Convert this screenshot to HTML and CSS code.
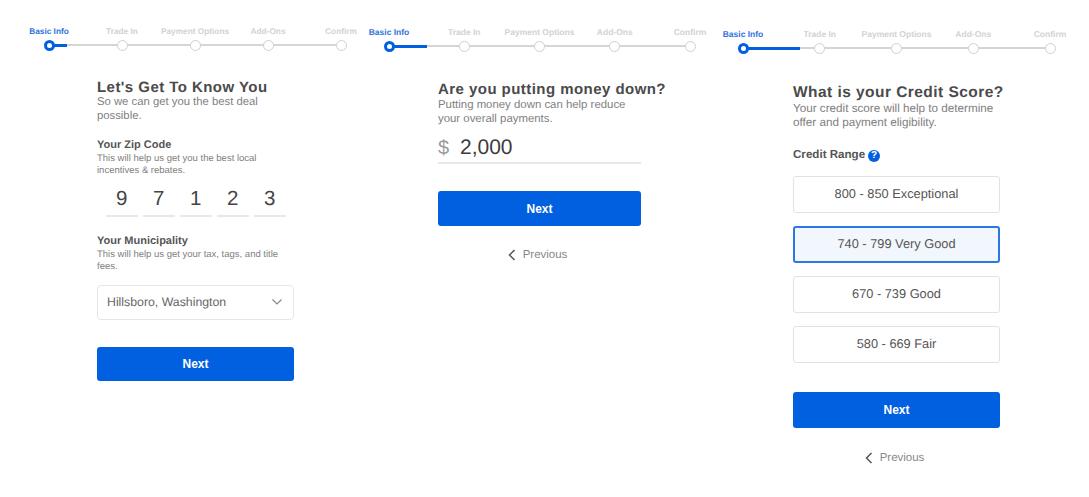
FILE: index.html
```html
<!DOCTYPE html>
<html lang="en">
<head>
    <meta charset="UTF-8">
    <meta name="viewport" content="width=device-width, initial-scale=1.0">
    <title>Get Started</title>
    <link rel="stylesheet" href="styles.css">
</head>
<body>
    <section class="panel panel-zip">
        <div class="stepper">
            <span class="track"></span>
            <span class="track-fill"></span>
            <div class="step active"><span class="step-label">Basic Info</span><span class="step-dot"></span></div>
            <div class="step"><span class="step-label">Trade In</span><span class="step-dot"></span></div>
            <div class="step"><span class="step-label">Payment Options</span><span class="step-dot"></span></div>
            <div class="step"><span class="step-label">Add-Ons</span><span class="step-dot"></span></div>
            <div class="step"><span class="step-label">Confirm</span><span class="step-dot"></span></div>
        </div>
        <div class="content">
            <h2 class="title">Let's Get To Know You</h2>
            <p class="sub">So we can get you the best deal possible.</p>
            <h4 class="label zip-label">Your Zip Code</h4>
            <p class="hint">This will help us get you the best local incentives &amp; rebates.</p>
            <div class="zip-row">
                <span class="zip-digit">9</span>
                <span class="zip-digit">7</span>
                <span class="zip-digit">1</span>
                <span class="zip-digit">2</span>
                <span class="zip-digit">3</span>
            </div>
            <h4 class="label muni-label">Your Municipality</h4>
            <p class="hint">This will help us get your tax, tags, and title fees.</p>
            <div class="select">
                <span>Hillsboro, Washington</span>
                <svg width="12" height="8" viewBox="0 0 12 8"><path d="M1.500 1.500 6 6l4.500-4.500" fill="none" stroke="#888" stroke-width="1.200"/></svg>
            </div>
            <button type="button" class="button">Next</button>
        </div>
    </section>

    <section class="panel panel-down">
        <div class="stepper">
            <span class="track"></span>
            <span class="track-fill"></span>
            <div class="step active"><span class="step-label">Basic Info</span><span class="step-dot"></span></div>
            <div class="step"><span class="step-label">Trade In</span><span class="step-dot"></span></div>
            <div class="step"><span class="step-label">Payment Options</span><span class="step-dot"></span></div>
            <div class="step"><span class="step-label">Add-Ons</span><span class="step-dot"></span></div>
            <div class="step"><span class="step-label">Confirm</span><span class="step-dot"></span></div>
        </div>
        <div class="content">
            <h2 class="title">Are you putting money down?</h2>
            <p class="sub">Putting money down can help reduce your overall payments.</p>
            <div class="amount"><span class="currency">$</span><span class="amount-value">2,000</span></div>
            <button type="button" class="button">Next</button>
            <a href="#" class="previous">
                <svg width="8" height="12" viewBox="0 0 8 12"><path d="M6.500 1 1.500 6l5 5" fill="none" stroke="#555" stroke-width="1.500"/></svg>
                Previous
            </a>
        </div>
    </section>

    <section class="panel panel-credit">
        <div class="stepper">
            <span class="track"></span>
            <span class="track-fill"></span>
            <div class="step active"><span class="step-label">Basic Info</span><span class="step-dot"></span></div>
            <div class="step"><span class="step-label">Trade In</span><span class="step-dot"></span></div>
            <div class="step"><span class="step-label">Payment Options</span><span class="step-dot"></span></div>
            <div class="step"><span class="step-label">Add-Ons</span><span class="step-dot"></span></div>
            <div class="step"><span class="step-label">Confirm</span><span class="step-dot"></span></div>
        </div>
        <div class="content">
            <h2 class="title">What is your Credit Score?</h2>
            <p class="sub">Your credit score will help to determine offer and payment eligibility.</p>
            <h4 class="label range-label">Credit Range
                <span class="help">?</span>
            </h4>
            <div class="options">
                <div class="option">800 - 850 Exceptional</div>
                <div class="option selected">740 - 799 Very Good</div>
                <div class="option">670 - 739 Good</div>
                <div class="option">580 - 669 Fair</div>
            </div>
            <button type="button" class="button">Next</button>
            <a href="#" class="previous">
                <svg width="8" height="12" viewBox="0 0 8 12"><path d="M6.500 1 1.500 6l5 5" fill="none" stroke="#555" stroke-width="1.500"/></svg>
                Previous
            </a>
        </div>
    </section>
</body>
</html>
```

FILE: styles.css
```css
* {
    box-sizing: border-box;
}

body {
    margin: 0;
    display: flex;
    align-items: flex-start;
    background: #fff;
    font-family: "Liberation Sans", Arial, sans-serif;
    text-rendering: geometricPrecision;
    color: #808080;
}

h2,
h4,
p {
    margin: 0;
}

.panel-zip {
    width: 369px;
    padding-top: 26px;
}

.panel-down {
    width: 354px;
    padding-top: 27px;
}

.panel-credit {
    width: 366px;
    padding-top: 29px;
}

/* stepper */

.stepper {
    position: relative;
    display: flex;
    justify-content: space-between;
    height: 26px;
}

.panel-zip .stepper {
    margin: 0 28px 0 49px;
}

.panel-down .stepper {
    margin: 0 33px 0 20px;
}

.panel-credit .stepper {
    margin: 0 39px 0 20px;
}

.track,
.track-fill {
    position: absolute;
    left: 0;
    top: 18px;
    height: 2px;
    background: #d5d5d5;
}

.track {
    width: 100%;
}

.track-fill {
    height: 3px;
    background: #0060df;
}

.panel-zip .track-fill {
    width: 18px;
}

.panel-down .track-fill {
    width: 38px;
}

.panel-credit .track-fill {
    width: 57px;
}

.step {
    position: relative;
    width: 0;
    display: flex;
    flex-direction: column;
    align-items: center;
}

.step-label {
    height: 14px;
    font-size: 8.300px;
    font-weight: bold;
    line-height: 11px;
    white-space: nowrap;
    color: #d2d2d2;
}

.panel-down .step-label,
.panel-credit .step-label {
    font-size: 8.500px;
}

.step-dot {
    flex: none;
    width: 11px;
    height: 11px;
    border: 1.500px solid #d0d0d0;
    border-radius: 50%;
    background: #fff;
}

.step.active .step-label {
    color: #2f74dc;
}

.step.active .step-dot {
    border: 3px solid #0060df;
}

/* form */

.panel-zip .content {
    width: 197px;
    margin: 27px 0 0 97px;
}

.panel-down .content {
    width: 203px;
    margin: 28px 0 0 69px;
}

.panel-credit .content {
    width: 207px;
    margin: 29px 0 0 70px;
}

.title {
    font-size: 15px;
    line-height: 18px;
    letter-spacing: 0.45px;
    white-space: nowrap;
    color: #4a4a4a;
}

.panel-credit .title {
    font-size: 15.500px;
}

.sub {
    font-size: 11.300px;
    line-height: 13.500px;
    margin-top: -1px;
}

.panel-down .sub {
    width: 190px;
    font-size: 11.400px;
    line-height: 14px;
}

.panel-credit .sub {
    width: 207px;
    margin-top: 0;
    font-size: 11.700px;
    line-height: 14px;
}

.label {
    font-size: 11px;
    line-height: 14px;
    color: #555;
}

.hint {
    margin-top: 1px;
    font-size: 9.500px;
    line-height: 11.500px;
}

.zip-label {
    margin-top: 15px;
}

.muni-label {
    margin-top: 17px;
}

.zip-row {
    display: flex;
    gap: 5.500px;
    margin: 6px 0 0 9px;
}

.zip-digit {
    width: 31.500px;
    height: 35px;
    border-bottom: 2px solid #e8e8e8;
    font-size: 20.500px;
    line-height: 34px;
    text-align: center;
    color: #444;
}

.select {
    display: flex;
    justify-content: space-between;
    align-items: center;
    height: 35px;
    margin-top: 13px;
    padding: 0 10px 2px 9px;
    border: 1px solid #e6e6e6;
    border-radius: 4px;
    font-size: 12.300px;
    color: #666;
}

.button {
    display: block;
    width: 100%;
    height: 35px;
    padding: 0;
    border: none;
    border-radius: 3px;
    background: #0060df;
    font-family: inherit;
    font-size: 12px;
    font-weight: bold;
    color: #fff;
}

.panel-zip .button {
    height: 34px;
    margin-top: 27px;
}

.panel-credit .button {
    height: 36px;
    margin-top: 29px;
}

.previous {
    display: flex;
    justify-content: center;
    align-items: center;
    gap: 7px;
    margin-top: 22px;
    padding-right: 4px;
    font-size: 11.500px;
    line-height: 14px;
    text-decoration: none;
    color: #888;
}

.panel-credit .previous {
    margin-top: 23px;
}

/* money down */

.amount {
    display: flex;
    align-items: center;
    height: 32px;
    margin: 6px 0 27px;
    padding-top: 2px;
    border-bottom: 2px solid #e8e8e8;
}

.currency {
    width: 22px;
    font-size: 20px;
    color: #999;
}

.amount-value {
    font-size: 21px;
    color: #3c3c3c;
}

/* credit */

.range-label {
    display: flex;
    align-items: center;
    gap: 3px;
    margin-top: 18px;
    font-size: 11.600px;
}

.help {
    width: 12px;
    height: 12px;
    margin-top: 2px;
    border-radius: 50%;
    background: #0060df;
    font-size: 10px;
    line-height: 12px;
    text-align: center;
    color: #fff;
}

.options {
    display: flex;
    flex-direction: column;
    gap: 13px;
    margin-top: 14px;
}

.option {
    height: 37px;
    border: 1px solid #e2e2e2;
    border-radius: 3px;
    font-size: 12.800px;
    line-height: 33px;
    text-align: center;
    color: #555;
}

.option.selected {
    border: 2px solid #2a78e4;
    background: #f2f6fd;
    line-height: 31px;
}
```
